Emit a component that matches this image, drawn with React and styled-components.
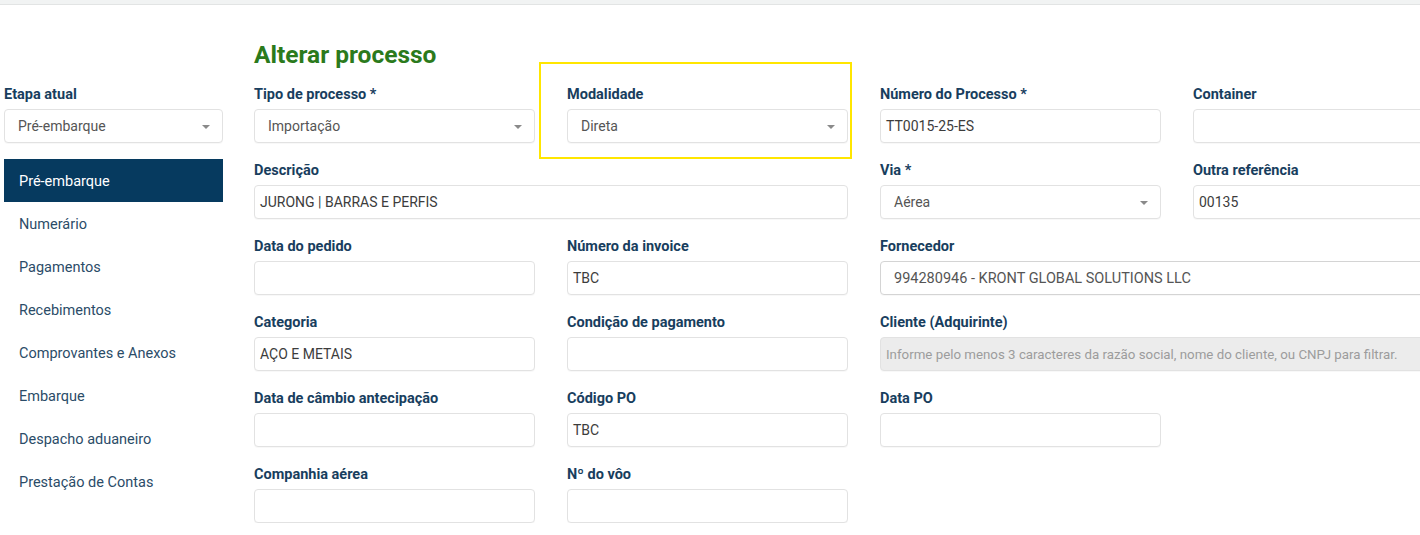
import React from 'react';
import styled, { createGlobalStyle } from 'styled-components';

const GlobalStyle = createGlobalStyle`
  html, body {
    margin: 0;
    padding: 0;
    overflow: hidden;
    background: #fff;
    font-family: Roboto, "Liberation Sans", Arial, sans-serif;
  }
  * { box-sizing: border-box; }
`;

const TopBar = styled.div`
  height: 5px;
  background: #f1f3f3;
  border-bottom: 1px solid #e2e4e4;
`;

const Page = styled.div`
  display: flex;
  gap: 31px;
  padding-left: 4px;
`;

const Sidebar = styled.aside`
  width: 219px;
  flex-shrink: 0;
  padding-top: 78px;
`;

const Main = styled.main`
  flex-shrink: 0;
  padding-top: 36px;
`;

const Title = styled.h1`
  margin: 0 0 14px;
  font-size: 24.5px;
  line-height: 28px;
  font-weight: 700;
  color: #2b7a1c;
`;

const Grid = styled.div`
  display: grid;
  grid-template-columns: repeat(4, 281px);
  column-gap: 32px;
  row-gap: 16px;
`;

const Field = styled.div`
  position: relative;
  display: flex;
  flex-direction: column;
  grid-column: span ${(p) => p.$span || 1};
`;

const Label = styled.label`
  font-size: 14.5px;
  line-height: 20px;
  font-weight: 700;
  color: #183e5e;
  padding-top: 2px;
  margin-bottom: 4px;
`;

const Box = styled.div`
  position: relative;
  height: 34px;
  display: flex;
  align-items: center;
  padding: 0 ${(p) => (p.$select ? '13px' : '5px')};
  border: 1px solid ${(p) => (p.$strong ? '#d4d4d4' : '#e2e2e2')};
  border-radius: 4px;
  background: ${(p) => (p.$disabled ? '#ececec' : '#fff')};
  box-shadow: 0 1px 1px rgba(0, 0, 0, 0.03);
  font-size: ${(p) => (p.$disabled ? '13.3px' : p.$strong ? '14.5px' : '14px')};
  color: ${(p) => (p.$disabled ? '#9c9c9c' : p.$select ? '#555' : '#3c3c3c')};
  white-space: nowrap;
  overflow: hidden;
`;

const Caret = styled.span`
  position: absolute;
  right: 12px;
  top: 15px;
  width: 0;
  height: 0;
  border-left: 4px solid transparent;
  border-right: 4px solid transparent;
  border-top: 4px solid #8a8a8a;
`;

const Highlight = styled.div`
  position: absolute;
  left: -28px;
  right: -4px;
  top: -21px;
  bottom: -16px;
  border: 2px solid #ffe600;
  pointer-events: none;
`;

const SideSelect = styled(Box)`
  margin-bottom: 16px;
`;

const NavList = styled.ul`
  list-style: none;
  margin: 0;
  padding: 0;
`;

const NavItem = styled.li`
  height: 43px;
  display: flex;
  align-items: center;
  padding: 1px 0 0 15px;
  font-size: 14.5px;
  color: ${(p) => (p.$active ? '#fff' : '#2b4c68')};
  background: ${(p) => (p.$active ? '#063a5f' : 'transparent')};
`;

const navItems = [
  'Pré-embarque',
  'Numerário',
  'Pagamentos',
  'Recebimentos',
  'Comprovantes e Anexos',
  'Embarque',
  'Despacho aduaneiro',
  'Prestação de Contas',
];

const fields = [
  { label: 'Tipo de processo *', value: 'Importação', select: true },
  { label: 'Modalidade', value: 'Direta', select: true, highlight: true },
  { label: 'Número do Processo *', value: 'TT0015-25-ES' },
  { label: 'Container', value: '' },
  { label: 'Descrição', value: 'JURONG | BARRAS E PERFIS', span: 2 },
  { label: 'Via *', value: 'Aérea', select: true },
  { label: 'Outra referência', value: '00135' },
  { label: 'Data do pedido', value: '' },
  { label: 'Número da invoice', value: 'TBC' },
  { label: 'Fornecedor', value: '994280946 - KRONT GLOBAL SOLUTIONS LLC', span: 2, combo: true },
  { label: 'Categoria', value: 'AÇO E METAIS' },
  { label: 'Condição de pagamento', value: '' },
  {
    label: 'Cliente (Adquirinte)',
    value: 'Informe pelo menos 3 caracteres da razão social, nome do cliente, ou CNPJ para filtrar.',
    span: 2,
    disabled: true,
  },
  { label: 'Data de câmbio antecipação', value: '' },
  { label: 'Código PO', value: 'TBC' },
  { label: 'Data PO', value: '' },
  { label: '', value: null },
  { label: 'Companhia aérea', value: '' },
  { label: 'Nº do vôo', value: '' },
];

const App = () => {
  return (
    <>
      <GlobalStyle />
      <TopBar />
      <Page>
        <Sidebar>
          <Field>
            <Label>Etapa atual</Label>
            <SideSelect $select>
              Pré-embarque
              <Caret />
            </SideSelect>
          </Field>
          <NavList>
            {navItems.map((item, i) => (
              <NavItem key={item} $active={i === 0}>
                {item}
              </NavItem>
            ))}
          </NavList>
        </Sidebar>

        <Main>
          <Title>Alterar processo</Title>
          <Grid>
            {fields.map((f, i) =>
              f.value === null ? (
                <div key={i} />
              ) : (
                <Field key={i} $span={f.span}>
                  <Label>{f.label}</Label>
                  <Box
                    $select={f.select || f.combo}
                    $strong={f.combo}
                    $disabled={f.disabled}
                  >
                    {f.value}
                    {f.select && <Caret />}
                  </Box>
                  {f.highlight && <Highlight />}
                </Field>
              )
            )}
          </Grid>
        </Main>
      </Page>
    </>
  );
};

export default App;
